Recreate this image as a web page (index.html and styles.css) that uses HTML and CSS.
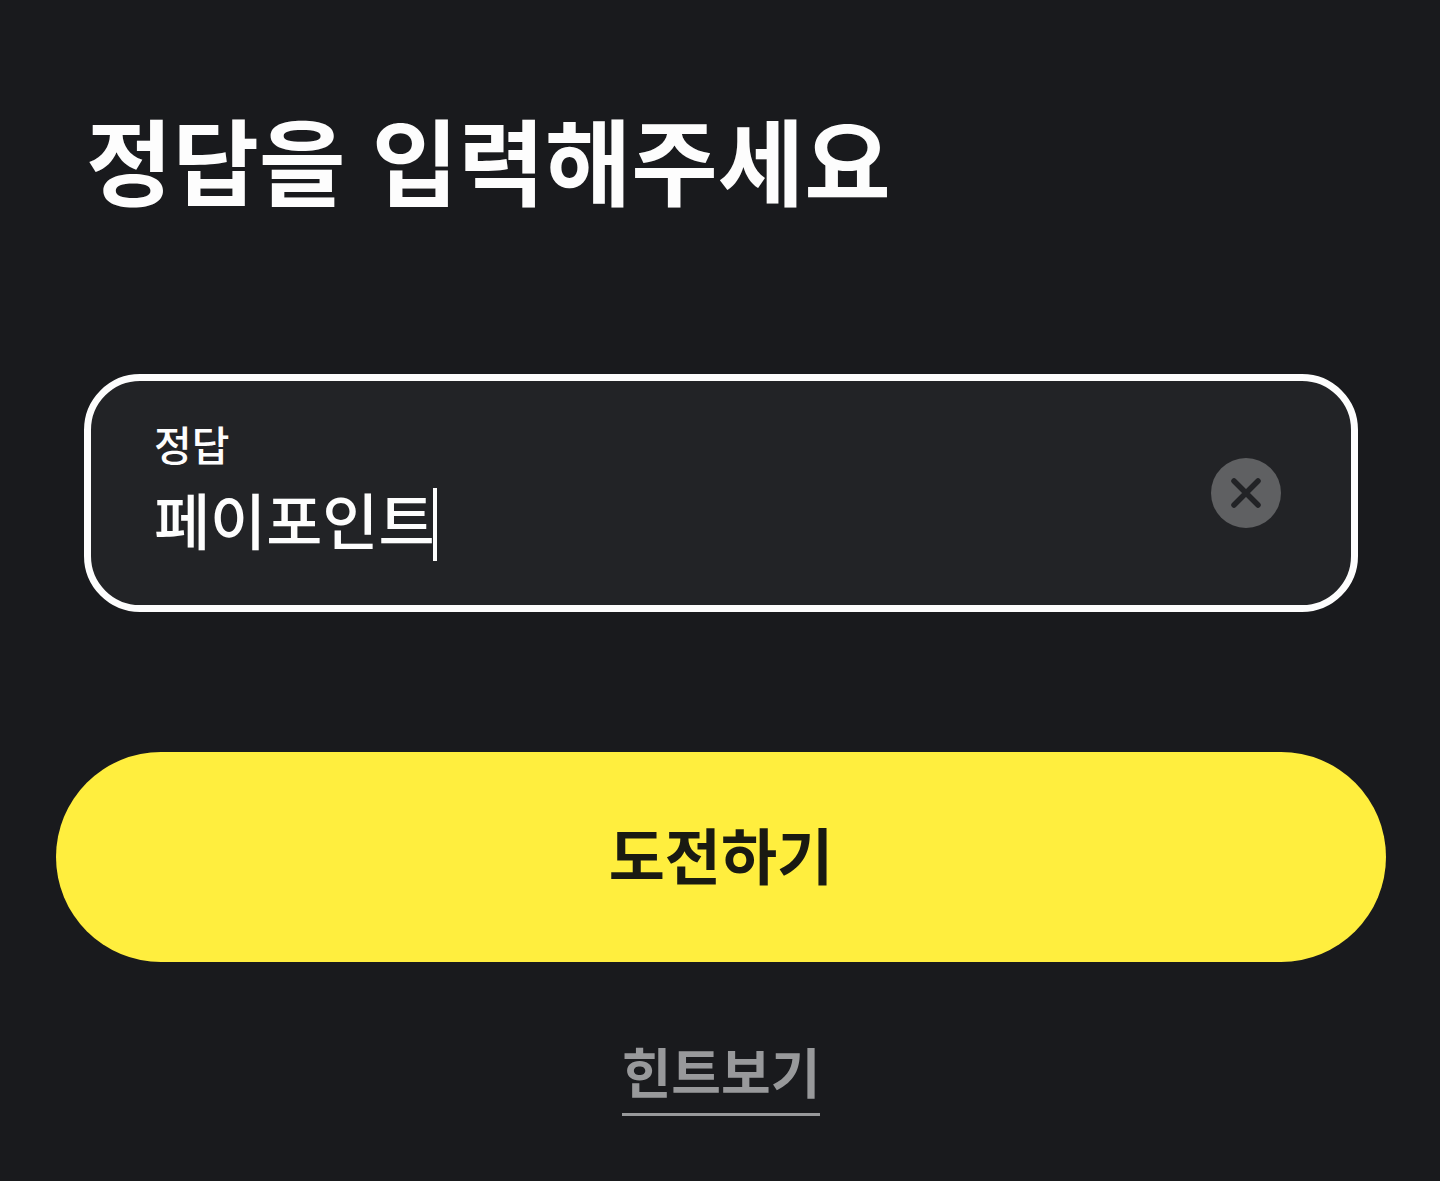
FILE: index.html
```html
<!DOCTYPE html>
<html lang="ko">
<head>
<meta charset="UTF-8" />
<title>정답을 입력해주세요</title>
<meta name="viewport" content="width=device-width, initial-scale=1.0" />
<link rel="stylesheet" href="styles.css">
</head>
<body>
    <main class="quiz">
        <h1 class="quiz-title">정답을 입력해주세요</h1>

        <form class="quiz-form">
            <div class="answer">
                <div class="answer-body">
                    <label class="answer-label" for="answer-input">정답</label>
                    <div class="answer-line">
                        <input type="text" class="answer-input" id="answer-input" value="페이포인트" size="5" autocomplete="off" />
                        <span class="answer-caret"></span>
                    </div>
                </div>
                <button type="reset" class="answer-clear" aria-label="지우기">
                    <svg class="answer-clear-icon" viewBox="0 0 70 70" aria-hidden="true">
                        <circle cx="35" cy="35" r="35" fill="#5f6062" />
                        <path d="M23 23 L47 47 M47 23 L23 47" fill="none" stroke="#222326" stroke-width="5.5" stroke-linecap="round" />
                    </svg>
                </button>
            </div>

            <button type="submit" class="submit">도전하기</button>
        </form>

        <a class="hint" href="#hint">힌트보기</a>
    </main>
</body>
</html>
```
FILE: styles.css
```css
* {
    box-sizing:border-box;
    margin:0px;
    padding:0px;
}

body {
    font-family:'Noto Sans CJK KR', 'Noto Sans', sans-serif;
    color:#fdfdfd;
    background-color:#191a1d;
}

input, button {
    border:none;
    font-family:inherit;
    color:inherit;
    background:none;
}

button {
    cursor:pointer;
}

.quiz {
    display:flex;
    flex-direction:column;
    padding:90px 54px 64px 56px;
}

.quiz-title {
    padding:0px 30px;
    font-size:94px;
    font-weight:700;
    line-height:136px;
}

.quiz-form {
    display:flex;
    flex-direction:column;
    gap:140px;
    margin-top:148px;
}

.answer {
    display:flex;
    align-items:center;
    justify-content:space-between;
    margin:0px 28px;
    border:7px solid #fdfdfd;
    border-radius:56px;
    padding:32px 70px 32px 63px;
    background-color:#222326;
}

.answer-label {
    display:block;
    font-size:41px;
    font-weight:500;
    line-height:60px;
}

.answer-line {
    display:flex;
    align-items:flex-end;
    padding-bottom:8px;
}

.answer-input {
    field-sizing:content;
    outline:none;
    font-size:61px;
    font-weight:500;
    line-height:92px;
}

.answer-caret {
    width:4px;
    height:73px;
    margin:0px 0px 4px -2px;
    background-color:#fdfdfd;
}

.answer-clear {
    width:70px;
    height:70px;
    border-radius:50%;
}

.answer-clear-icon {
    display:block;
    width:100%;
}

.submit {
    border-radius:105px;
    padding:56px 0px 62px;
    font-size:61px;
    font-weight:700;
    line-height:92px;
    color:#191a12;
    background-color:#ffee3e;
}

.hint {
    align-self:center;
    margin-top:69px;
    border-bottom:3px solid #98999b;
    padding-bottom:2px;
    font-size:54px;
    font-weight:700;
    line-height:80px;
    color:#98999b;
    text-decoration:none;
}
```
